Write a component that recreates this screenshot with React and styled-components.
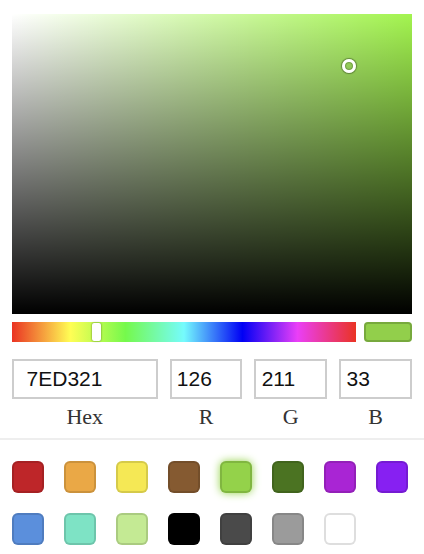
import React from "react";
import styled, { createGlobalStyle } from "styled-components";

const Global = createGlobalStyle`
  html, body { margin: 0; padding: 0; background: #fff; }
  body { width: 424px; height: 554px; overflow: hidden; }
  * { box-sizing: border-box; }
`;

const Picker = styled.div`
  width: 424px;
  background: #fff;
  display: flex;
  flex-direction: column;
`;

const Top = styled.div`
  padding: 14px 12px 0;
  display: flex;
  flex-direction: column;
`;

const Saturation = styled.div`
  position: relative;
  width: 400px;
  height: 300px;
  background: ${(p) => p.$hue};
`;

const WhiteLayer = styled.div`
  position: absolute;
  inset: 0;
  background: linear-gradient(to right, #fff, rgba(255, 255, 255, 0));
`;

const BlackLayer = styled.div`
  position: absolute;
  inset: 0;
  background: linear-gradient(to top, #000, rgba(0, 0, 0, 0));
`;

const SatPointer = styled.div`
  position: absolute;
  width: 14px;
  height: 14px;
  margin: -7px 0 0 -7px;
  border-radius: 50%;
  border: 3px solid #fff;
  box-shadow: 0 0 1px 1px rgba(0, 0, 0, 0.35), inset 0 0 1px 1px rgba(0, 0, 0, 0.25);
`;

const HueRow = styled.div`
  display: flex;
  gap: 8px;
  margin-top: 8px;
  height: 20px;
`;

const HueBar = styled.div`
  position: relative;
  flex: 1;
  background: linear-gradient(
    to right,
    #ea3323 0%,
    #fffe55 17%,
    #75f94c 33%,
    #75fbfd 50%,
    #0000f5 67%,
    #ea3ff7 83%,
    #ea3323 100%
  );
`;

const HuePointer = styled.div`
  position: absolute;
  top: 1px;
  width: 9px;
  height: 18px;
  margin-left: -4.5px;
  border-radius: 2px;
  background: #fff;
  box-shadow: 0 0 2px rgba(0, 0, 0, 0.6);
`;

const Current = styled.div`
  width: 48px;
  height: 20px;
  border-radius: 4px;
  background: ${(p) => p.$color};
  box-shadow: inset 0 0 0 2px rgba(0, 0, 0, 0.18);
`;

const Fields = styled.div`
  display: flex;
  gap: 12px;
  margin-top: 17px;
`;

const Field = styled.div`
  flex: ${(p) => p.$flex};
  display: flex;
  flex-direction: column;
  align-items: stretch;
`;

const Input = styled.input`
  width: 100%;
  height: 40px;
  padding: 0 10%;
  border: none;
  box-shadow: inset 0 0 0 2px #cdcdcd;
  border-radius: 0;
  outline: none;
  font-family: "Liberation Sans", Arial, sans-serif;
  font-size: 21px;
  color: #111;
  background: #fff;
`;

const Label = styled.div`
  text-align: center;
  font-family: "Liberation Serif", "Times New Roman", serif;
  font-size: 22px;
  color: #333;
  margin-top: 4px;
  line-height: 28px;
`;

const Divider = styled.div`
  height: 2px;
  background: #eeeeee;
  margin-top: 7px;
`;

const Swatches = styled.div`
  display: grid;
  grid-template-columns: repeat(8, 32px);
  column-gap: 20px;
  row-gap: 20px;
  padding: 21px 12px 0;
`;

const Swatch = styled.div`
  width: 32px;
  height: 32px;
  border-radius: 6px;
  background: ${(p) => p.$color};
  box-shadow: inset 0 0 0 2px rgba(0, 0, 0, 0.13)
    ${(p) => (p.$active ? `, 0 0 8px ${p.$color}` : "")};
`;

const presets = [
  "#BE2629", "#EAA846", "#F5E855", "#855A31", "#94D24A", "#4B7322", "#A925D4", "#8720F2",
  "#5B8FDC", "#7EE3C5", "#C4EA94", "#000000", "#4A4A4A", "#9B9B9B", "#FFFFFF",
];

export default function App() {
  const sat = 0.8425;
  const val = 0.827;
  const hue = 88.65;
  return (
    <>
      <Global />
      <Picker>
        <Top>
          <Saturation $hue="#a3f44f">
            <WhiteLayer />
            <BlackLayer />
            <SatPointer style={{ left: `${sat * 100}%`, top: `${(1 - val) * 100}%` }} />
          </Saturation>
          <HueRow>
            <HueBar>
              <HuePointer style={{ left: `${(hue / 360) * 100}%` }} />
            </HueBar>
            <Current $color="#92CF4B" />
          </HueRow>
          <Fields>
            <Field $flex={2}>
              <Input defaultValue="7ED321" />
              <Label>Hex</Label>
            </Field>
            <Field $flex={1}>
              <Input defaultValue="126" />
              <Label>R</Label>
            </Field>
            <Field $flex={1}>
              <Input defaultValue="211" />
              <Label>G</Label>
            </Field>
            <Field $flex={1}>
              <Input defaultValue="33" />
              <Label>B</Label>
            </Field>
          </Fields>
        </Top>
        <Divider />
        <Swatches>
          {presets.map((c, i) => (
            <Swatch key={c} $color={c} $active={i === 4} />
          ))}
        </Swatches>
      </Picker>
    </>
  );
}
